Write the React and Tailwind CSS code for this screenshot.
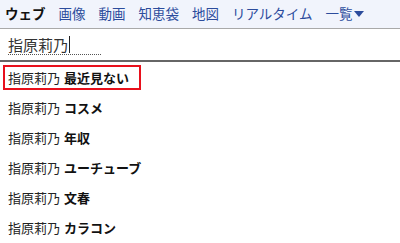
import React from "react";

const items = ["最近見ない", "コスメ", "年収", "ユーチューブ", "文春", "カラコン"];
const nav = ["画像", "動画", "知恵袋", "地図", "リアルタイム"];

export default function App() {
  return (
    <div
      className="w-[400px] h-[243px] bg-white overflow-hidden"
      style={{ fontFamily: '"Noto Sans CJK JP", "Noto Sans", sans-serif' }}
    >
      <div className="h-[28px] bg-[#f1f4fc] border-b border-[#a9a9a9] flex items-center pl-[5px] text-[13.5px] leading-none box-content">
        <span className="font-bold text-[#111] mr-[13px]">ウェブ</span>
        {nav.map((n) => (
          <span key={n} className="text-[#2c4c9c] mr-[13px]">{n}</span>
        ))}
        <span className="text-[#2c4c9c] flex items-center">
          一覧
          <svg width="10" height="8" viewBox="0 0 10 8" className="ml-[1px]">
            <path d="M0 1 L10 1 L5 7 Z" fill="#2c4c9c" />
          </svg>
        </span>
      </div>
      <div className="h-[33px] border-b-2 border-[#666] pl-[8px] pt-[7px]">
        <div className="w-[93px] h-[19px] border-b border-dotted border-[#555] flex items-start">
          <span className="text-[15px] leading-none text-[#333] flex items-center">
            指原莉乃
            <span className="inline-block w-[1px] h-[17px] bg-[#222] ml-[1px]" />
          </span>
        </div>
      </div>
      <div className="flex flex-col text-[13px] leading-none text-[#222]">
        {items.map((it, i) => (
          <div key={it} className="h-[30px] flex items-center">
            {i === 0 ? (
              <div className="ml-[3px] h-[25px] w-[138px] border-2 border-[#e8101c] flex items-center pl-[3px]">
                <span>指原莉乃</span>
                <span className="font-bold ml-[4px] text-[#111]">{it}</span>
              </div>
            ) : (
              <div className="pl-[8px] flex items-center">
                <span>指原莉乃</span>
                <span className="font-bold ml-[4px] text-[#111]">{it}</span>
              </div>
            )}
          </div>
        ))}
      </div>
    </div>
  );
}
